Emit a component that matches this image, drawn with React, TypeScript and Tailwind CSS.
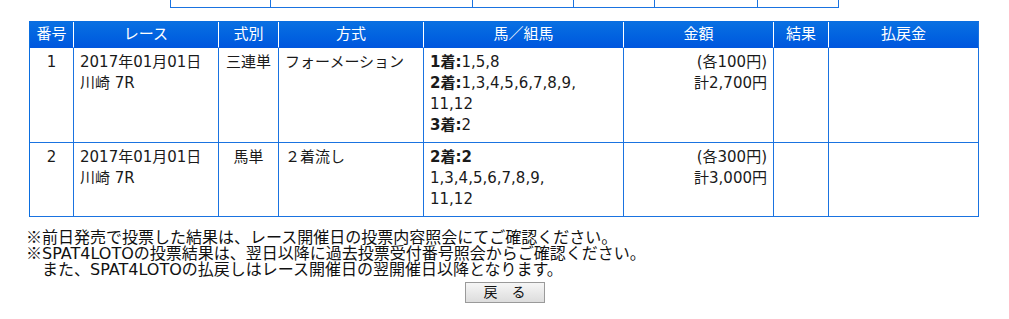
import React from "react";

type Bet = {
  no: string;
  date: string;
  race: string;
  kind: string;
  method: string;
  horses: React.ReactNode;
  each: string;
  total: string;
};

const bets: Bet[] = [
  {
    no: "1",
    date: "2017年01月01日",
    race: "川崎 7R",
    kind: "三連単",
    method: "フォーメーション",
    horses: (
      <>
        <div>
          <b>1着:</b>1,5,8
        </div>
        <div>
          <b>2着:</b>1,3,4,5,6,7,8,9,
          <br />
          11,12
        </div>
        <div>
          <b>3着:</b>2
        </div>
      </>
    ),
    each: "(各100円)",
    total: "計2,700円",
  },
  {
    no: "2",
    date: "2017年01月01日",
    race: "川崎 7R",
    kind: "馬単",
    method: "２着流し",
    horses: (
      <>
        <div>
          <b>2着:2</b>
        </div>
        <div>
          1,3,4,5,6,7,8,9,
          <br />
          11,12
        </div>
      </>
    ),
    each: "(各300円)",
    total: "計3,000円",
  },
];

const headers = ["番号", "レース", "式別", "方式", "馬／組馬", "金額", "結果", "払戻金"];

const cell = "border-r border-b border-[#1a73e0] pt-[4px] pb-[6px] px-[6px] leading-[21px]";

function Mark() {
  return <span className="font-['Noto_Sans_CJK_JP',sans-serif] leading-[0]">※</span>;
}

export default function App() {
  return (
    <div
      className="w-[1009px] h-[319px] bg-white text-[#1a1a1a] overflow-hidden"
      style={{ fontFamily: "'DejaVu Sans', 'Noto Sans CJK JP', sans-serif" }}
    >
      {/* tail of the previous table */}
      <div className="ml-[170px] w-[669px] grid grid-cols-[100px_202px_101px_81px_103px_81px] border-l border-[#1a73e0]">
        {Array.from({ length: 6 }).map((_, i) => (
          <div key={i} className="h-[8px] border-r border-b border-[#1a73e0]" />
        ))}
      </div>

      {/* bet list */}
      <div className="ml-[29px] mt-[13px] w-[950px] grid grid-cols-[44px_145px_60px_145px_200px_150px_55px_150px] border-l border-t border-[#0a6ee0] text-[15px]">
        {headers.map((h, i) => (
          <div
            key={h}
            className={`h-[26px] flex items-center justify-center text-white bg-gradient-to-b from-[#0a70e2] to-[#0057de] border-b border-b-[#0057de] border-r ${
              i === headers.length - 1 ? "border-r-[#1a73e0]" : "border-r-white"
            }`}
          >
            {h}
          </div>
        ))}
        {bets.map((b) => (
          <React.Fragment key={b.no}>
            <div className={`${cell} text-center`}>{b.no}</div>
            <div className={cell}>
              <div>{b.date}</div>
              <div>{b.race}</div>
            </div>
            <div className={`${cell} text-center`}>{b.kind}</div>
            <div className={cell}>{b.method}</div>
            <div className={cell}>{b.horses}</div>
            <div className={`${cell} text-right`}>
              <div>{b.each}</div>
              <div>{b.total}</div>
            </div>
            <div className={cell} />
            <div className={cell} />
          </React.Fragment>
        ))}
      </div>

      {/* notes */}
      <div className="mt-[13px] pl-[26px] text-[16px] leading-[16px] text-[#111]">
        <div className="h-[16px]">
          <Mark />
          前日発売で投票した結果は、レース開催日の投票内容照会にてご確認ください。
        </div>
        <div className="h-[16px]">
          <Mark />
          SPAT4LOTOの投票結果は、翌日以降に過去投票受付番号照会からご確認ください。
        </div>
        <div className="h-[16px]">　また、SPAT4LOTOの払戻しはレース開催日の翌開催日以降となります。</div>
      </div>

      <div className="mt-[4px] flex justify-center">
        <button
          type="button"
          className="w-[80px] h-[21px] border border-[#9a9a9a] bg-gradient-to-b from-[#f6f6f6] to-[#dddddd] text-[14px] leading-[19px] text-[#111]"
        >
          戻　る
        </button>
      </div>
    </div>
  );
}
